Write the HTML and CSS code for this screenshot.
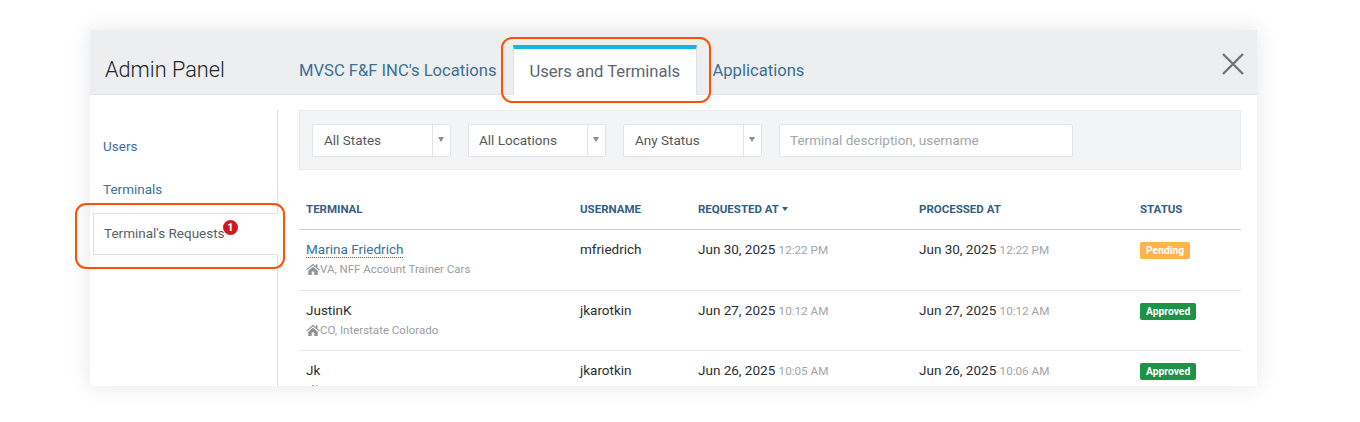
FILE: index.html
```html
<!DOCTYPE html>
<html lang="en">
<head>
<meta charset="utf-8">
<title>Admin Panel</title>
<link rel="stylesheet" href="styles.css">
</head>
<body>
<div class="stage">
  <div class="panel">
    <header class="head">
      <h1 class="title">Admin Panel</h1>
      <nav class="tabs">
        <a class="tab">MVSC F&amp;F INC's Locations</a>
        <a class="tab tab-active">Users and Terminals</a>
        <a class="tab">Applications</a>
      </nav>
      <svg class="close" width="24" height="24" viewBox="0 0 24 24"><path d="M2 2 22 22M22 2 2 22" fill="none" stroke="#707478" stroke-width="2.4"/></svg>
    </header>
    <div class="body">
      <aside class="side">
        <a class="side-link side-users">Users</a>
        <a class="side-link side-terminals">Terminals</a>
        <a class="side-item">Terminal's Requests<span class="count">1</span></a>
      </aside>
      <main class="main">
        <div class="filters">
          <div class="select sel-a"><span class="sel-text">All States</span><span class="sel-arrow"></span></div>
          <div class="select sel-b"><span class="sel-text">All Locations</span><span class="sel-arrow"></span></div>
          <div class="select sel-a"><span class="sel-text">Any Status</span><span class="sel-arrow"></span></div>
          <div class="search">Terminal description, username</div>
        </div>
        <div class="row row-head">
          <div class="c1">TERMINAL</div>
          <div class="c2">USERNAME</div>
          <div class="c3">REQUESTED AT <span class="caret"></span></div>
          <div class="c4">PROCESSED AT</div>
          <div class="c5">STATUS</div>
        </div>
        <div class="row">
          <div class="c1"><a class="name-link">Marina Friedrich</a>
            <div class="sub"><svg class="home" viewBox="0 0 16 14" width="14" height="12"><path d="M8 1 0 7.6l.9 1L8 3l7.100 5.600.9-1L13.200 5.400V1.500h-2v2.300zM2.500 9v5h4V10h3v4h4V9L8 4.500z" fill="#8f9396"/></svg>VA, NFF Account Trainer Cars</div></div>
          <div class="c2">mfriedrich</div>
          <div class="c3">Jun 30, 2025 <span class="time">12:22 PM</span></div>
          <div class="c4">Jun 30, 2025 <span class="time">12:22 PM</span></div>
          <div class="c5"><span class="badge pending">Pending</span></div>
        </div>
        <div class="row">
          <div class="c1">JustinK
            <div class="sub"><svg class="home" viewBox="0 0 16 14" width="14" height="12"><path d="M8 1 0 7.6l.9 1L8 3l7.100 5.600.9-1L13.200 5.400V1.500h-2v2.300zM2.500 9v5h4V10h3v4h4V9L8 4.500z" fill="#8f9396"/></svg>CO, Interstate Colorado</div></div>
          <div class="c2">jkarotkin</div>
          <div class="c3">Jun 27, 2025 <span class="time">10:12 AM</span></div>
          <div class="c4">Jun 27, 2025 <span class="time">10:12 AM</span></div>
          <div class="c5"><span class="badge approved">Approved</span></div>
        </div>
        <div class="row">
          <div class="c1">Jk
            <div class="sub"><svg class="home" viewBox="0 0 16 14" width="14" height="12"><path d="M8 1 0 7.6l.9 1L8 3l7.100 5.600.9-1L13.200 5.400V1.500h-2v2.300zM2.500 9v5h4V10h3v4h4V9L8 4.500z" fill="#8f9396"/></svg>CO, Interstate Colorado</div></div>
          <div class="c2">jkarotkin</div>
          <div class="c3">Jun 26, 2025 <span class="time">10:05 AM</span></div>
          <div class="c4">Jun 26, 2025 <span class="time">10:06 AM</span></div>
          <div class="c5"><span class="badge approved">Approved</span></div>
        </div>
      </main>
    </div>
  </div>
  <div class="mark mark-tab"></div>
  <div class="mark mark-side"></div>
</div>
</body>
</html>
```
FILE: styles.css
```css
* { box-sizing: border-box; }
html, body { margin: 0; height: 422px; overflow: hidden; background: #fff; }
body { font-family: Roboto, "Liberation Sans", sans-serif; color: #2b2f33; }
.stage { position: relative; width: 1360px; height: 422px; padding: 30px 103px 36px 90px; }
.panel { width: 1167px; height: 356px; background: #fff; overflow: hidden; box-shadow: 0 0 22px rgba(0, 0, 0, .10); }

.head { height: 65px; display: flex; align-items: flex-end; background: #edeef0; border-bottom: 1px solid #e1e3e6; position: relative; }
.title { margin: 0 0 11px 15px; width: 194px; font-size: 21.700px; font-weight: 300; line-height: 26px; color: #22262a; flex: none; }
.tabs { display: flex; align-items: flex-end; }
.tab { font-size: 16.600px; line-height: 20px; color: #3b7097; padding-bottom: 13px; }
.tab-active { width: 184px; height: 50px; margin: 0 15px -1px 17px; padding: 12px 0 0 15px; background: #fff; border-top: 4px solid #17b5e6; border-left: 1px solid #dfe1e4; border-right: 1px solid #dfe1e4; color: #5c6770; line-height: 22px; }
.close { position: absolute; right: 12px; top: 22px; }

.body { display: flex; height: 291px; }
.side { width: 188px; height: 276px; margin-top: 15px; border-right: 1px solid #dcdfe3; display: flex; flex-direction: column; flex: none; }
.side-link { font-size: 13.500px; line-height: 16px; color: #3b7097; margin-left: 13px; }
.side-users { margin-top: 28px; }
.side-terminals { margin-top: 27px; }
.side-item { margin: 16px -1px 0 3px; height: 42px; background: #fff; border: 1px solid #dfe1e4; border-right: 0; padding: 11px 0 0 10px; font-size: 13.500px; line-height: 17px; color: #5a5f64; position: relative; }
.count { position: absolute; left: 129px; top: 6px; width: 15px; height: 15px; border-radius: 50%; background: #d3161f; color: #fff; font-size: 10px; font-weight: 900; line-height: 15px; text-align: center; }

.main { width: 942px; margin: 15px 0 0 21px; flex: none; }
.filters { height: 60px; display: flex; align-items: center; gap: 17px; padding: 0 12px; background: #f3f4f5; border: 1px solid #e7e9eb; }
.select { height: 33px; display: flex; background: #fff; border: 1px solid #e2e4e7; border-radius: 2px; font-size: 13.500px; color: #55595d; }
.sel-a { width: 139px; }
.sel-b { width: 138px; }
.sel-text { flex: 1; padding-left: 11px; line-height: 30px; }
.sel-b .sel-text { padding-left: 10px; }
.sel-arrow { width: 18px; border-left: 1px solid #e2e4e7; position: relative; }
.sel-arrow::after { content: ""; position: absolute; left: 5px; top: 12px; border: 3px solid transparent; border-top: 5px solid #8a8e92; border-bottom: 0; }
.search { width: 294px; height: 33px; background: #fff; border: 1px solid #e2e4e7; border-radius: 2px; padding-left: 10px; font-size: 13.500px; line-height: 31px; color: #a3a6a9; }

.row { display: flex; height: 60.500px; padding-top: 9px; border-bottom: 1px solid #e6e8ec; font-size: 13.500px; line-height: 20px; color: #2b2f33; }
.row-head { height: 60px; padding-top: 29px; border-bottom: 1px solid #c3cfdc; font-size: 11.500px; font-weight: 700; color: #33607f; }
.c1, .c2, .c3, .c4, .c5 { flex: none; }
.c1 { width: 281px; padding-left: 7px; }
.c2 { width: 118px; }
.c3, .c4 { width: 221px; }
.c5 { width: 101px; }
.caret { display: inline-block; vertical-align: 2px; border: 3.500px solid transparent; border-top: 4px solid #33607f; border-bottom: 0; }
.time { font-size: 11.700px; color: #a2a5a8; }
.name-link { color: #3b7097; border-bottom: 1px dotted #3b7097; }
.sub { display: flex; align-items: center; margin-top: 1px; font-size: 11.500px; line-height: 18px; color: #9a9da0; }
.home { flex: none; }
.badge { display: inline-block; height: 17px; margin-top: 3px; padding: 0 6px; border-radius: 2px; font-size: 10.300px; font-weight: 700; line-height: 17px; color: #fff; vertical-align: top; }
.pending { background: #fdb549; }
.approved { background: #1e9246; }

.mark { position: absolute; border: 2px solid #ff5200; border-radius: 11px; }
.mark-tab { left: 501px; top: 37px; width: 210px; height: 66px; }
.mark-side { left: 75px; top: 203px; width: 210px; height: 66px; }
```
